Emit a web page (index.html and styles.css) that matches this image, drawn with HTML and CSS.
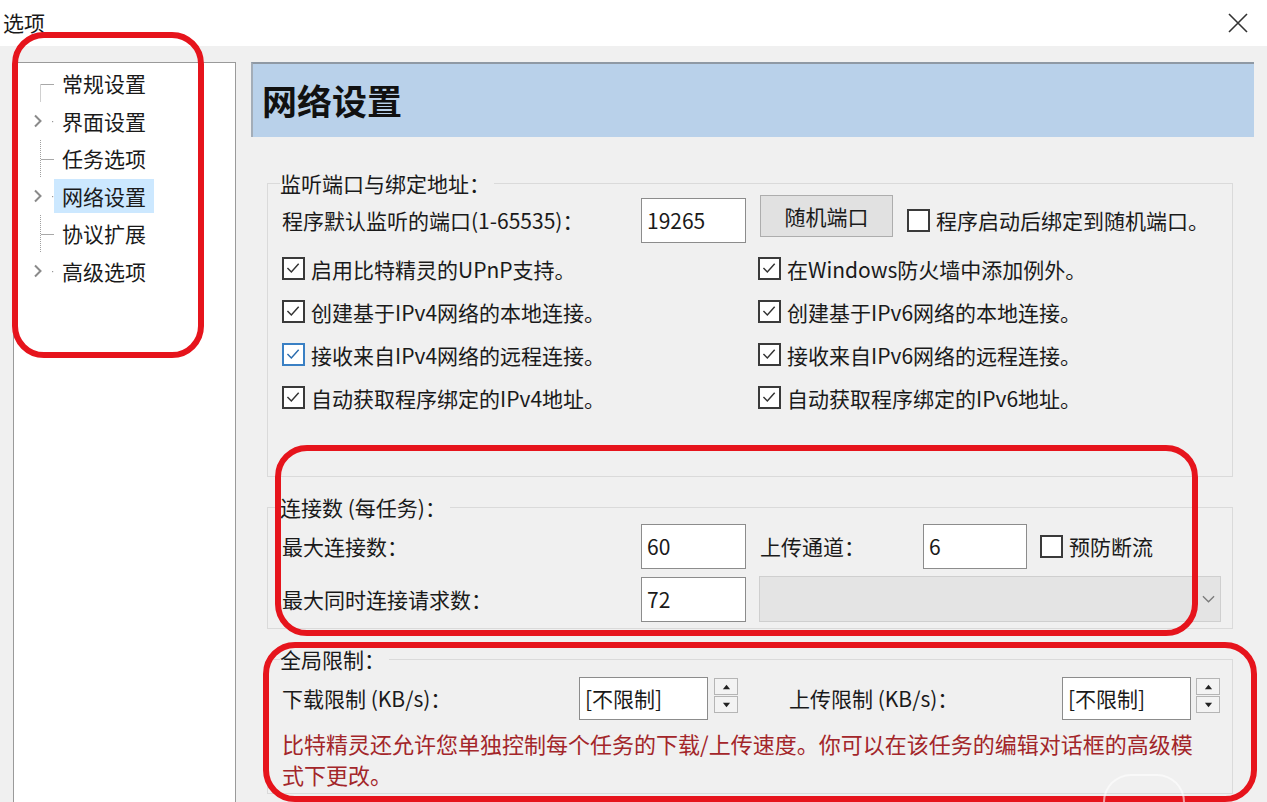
FILE: index.html
```html
<!DOCTYPE html>
<html lang="zh-CN">
<head>
  <meta charset="utf-8">
  <meta name="viewport" content="width=device-width, initial-scale=1.0">
  <title>选项</title>
  <link rel="stylesheet" href="styles.css">
</head>
<body>
  <div class="titlebar">
    <span class="title">选项</span>
    <svg class="close" viewBox="0 0 20 20"><path d="M1 1 L19 19 M19 1 L1 19"/></svg>
  </div>

  <div class="main">
    <!-- left navigation tree -->
    <ul class="tree">
      <li>
        <svg class="gutter" viewBox="0 0 40 37.5"><path class="dots" d="M26.5 19.5 V37.5"/><path class="hline" d="M27 19.5 H41"/></svg>
        <span class="label">常规设置</span>
      </li>
      <li>
        <svg class="gutter" viewBox="0 0 40 37.5"><path class="chev" d="M21 13.5 L26.5 19 L21 24.5"/><rect class="dot" x="38" y="19" width="1.2" height="1.2"/></svg>
        <span class="label">界面设置</span>
      </li>
      <li>
        <svg class="gutter" viewBox="0 0 40 37.5"><path class="dots" d="M26.5 0 V37.5"/><path class="hline" d="M27 19.5 H41"/></svg>
        <span class="label">任务选项</span>
      </li>
      <li class="selected">
        <svg class="gutter" viewBox="0 0 40 37.5"><path class="chev" d="M21 13.5 L26.5 19 L21 24.5"/><rect class="dot" x="38" y="19" width="1.2" height="1.2"/></svg>
        <span class="label">网络设置</span>
      </li>
      <li>
        <svg class="gutter" viewBox="0 0 40 37.5"><path class="dots" d="M26.5 0 V37.5"/><path class="hline" d="M27 19.5 H41"/></svg>
        <span class="label">协议扩展</span>
      </li>
      <li>
        <svg class="gutter" viewBox="0 0 40 37.5"><path class="chev" d="M21 13.5 L26.5 19 L21 24.5"/><rect class="dot" x="38" y="19" width="1.2" height="1.2"/></svg>
        <span class="label">高级选项</span>
      </li>
    </ul>

    <div class="content">
      <div class="page-header">网络设置</div>

      <fieldset class="group group-listen">
        <legend>监听端口与绑定地址：</legend>
        <div class="row port-row">
          <span class="lbl-wide">程序默认监听的端口(1-65535)：</span>
          <input class="textbox w-105" type="text" value="19265">
          <button class="btn">随机端口</button>
          <label class="check ml-14"><span class="cb"></span>程序启动后绑定到随机端口。</label>
        </div>
        <div class="check-grid">
          <label class="check"><span class="cb"><svg viewBox="0 0 22 22"><path d="M4 10.5 L8.5 15 L17 5.5"/></svg></span>启用比特精灵的UPnP支持。</label>
          <label class="check"><span class="cb"><svg viewBox="0 0 22 22"><path d="M4 10.5 L8.5 15 L17 5.5"/></svg></span>在Windows防火墙中添加例外。</label>
          <label class="check"><span class="cb"><svg viewBox="0 0 22 22"><path d="M4 10.5 L8.5 15 L17 5.5"/></svg></span>创建基于IPv4网络的本地连接。</label>
          <label class="check"><span class="cb"><svg viewBox="0 0 22 22"><path d="M4 10.5 L8.5 15 L17 5.5"/></svg></span>创建基于IPv6网络的本地连接。</label>
          <label class="check"><span class="cb hover"><svg viewBox="0 0 22 22"><path d="M4 10.5 L8.5 15 L17 5.5"/></svg></span>接收来自IPv4网络的远程连接。</label>
          <label class="check"><span class="cb"><svg viewBox="0 0 22 22"><path d="M4 10.5 L8.5 15 L17 5.5"/></svg></span>接收来自IPv6网络的远程连接。</label>
          <label class="check"><span class="cb"><svg viewBox="0 0 22 22"><path d="M4 10.5 L8.5 15 L17 5.5"/></svg></span>自动获取程序绑定的IPv4地址。</label>
          <label class="check"><span class="cb"><svg viewBox="0 0 22 22"><path d="M4 10.5 L8.5 15 L17 5.5"/></svg></span>自动获取程序绑定的IPv6地址。</label>
        </div>
      </fieldset>

      <fieldset class="group group-conn">
        <legend>连接数 (每任务)：</legend>
        <div class="row">
          <span class="lbl-wide">最大连接数：</span>
          <input class="textbox w-105" type="text" value="60">
          <span class="lbl-upload">上传通道：</span>
          <input class="textbox w-104" type="text" value="6">
          <label class="check ml-13"><span class="cb"></span>预防断流</label>
        </div>
        <div class="row row-gap">
          <span class="lbl-wide">最大同时连接请求数：</span>
          <input class="textbox w-105" type="text" value="72">
          <div class="combo">
            <svg viewBox="0 0 14 8"><path d="M1 1 L7 7 L13 1"/></svg>
          </div>
        </div>
      </fieldset>

      <fieldset class="group group-limit">
        <legend>全局限制：</legend>
        <div class="row">
          <span class="lbl-down">下载限制 (KB/s)：</span>
          <input class="textbox w-129" type="text" value="[不限制]">
          <div class="spin ml-6">
            <span class="spin-btn"><svg viewBox="0 0 10 6"><path d="M5 0.5 L9 5.5 H1 Z"/></svg></span>
            <span class="spin-btn"><svg viewBox="0 0 10 6"><path d="M1 0.5 H9 L5 5.5 Z"/></svg></span>
          </div>
          <span class="lbl-up">上传限制 (KB/s)：</span>
          <input class="textbox w-129" type="text" value="[不限制]">
          <div class="spin ml-5">
            <span class="spin-btn"><svg viewBox="0 0 10 6"><path d="M5 0.5 L9 5.5 H1 Z"/></svg></span>
            <span class="spin-btn"><svg viewBox="0 0 10 6"><path d="M1 0.5 H9 L5 5.5 Z"/></svg></span>
          </div>
        </div>
        <p class="note">比特精灵还允许您单独控制每个任务的下载/上传速度。你可以在该任务的编辑对话框的高级模式下更改。</p>
      </fieldset>
    </div>
  </div>

  <!-- red annotation frames drawn over the dialog -->
  <div class="mark mark-tree"></div>
  <div class="mark mark-conn"></div>
  <div class="mark mark-limit"></div>
  <div class="watermark"></div>
</body>
</html>
```

FILE: styles.css
```css
*, *::before, *::after {
  box-sizing: border-box;
  margin: 0;
  padding: 0;
}

body {
  position: relative;
  width: 1267px;
  height: 802px;
  overflow: hidden;
  background-color: #f0f0f0;
  font-family: "Noto Sans CJK SC", "Microsoft YaHei", sans-serif;
  font-size: 21px;
  color: #1a1a1a;
}

/* title bar */
.titlebar {
  height: 46px;
  background-color: #fff;
  display: flex;
  align-items: center;
  justify-content: space-between;
  padding: 0 19px 1px 3px;
}

.title {
  font-size: 21px;
  line-height: 1;
}

.close {
  width: 20px;
  height: 20px;
  stroke: #333;
  stroke-width: 1.6;
  fill: none;
}

.main {
  display: flex;
  height: 756px;
  overflow: hidden;
  padding: 16px 0 0 13px;
}

/* tree */
.tree {
  list-style: none;
  width: 223px;
  flex-shrink: 0;
  background-color: #fff;
  border: 1px solid #9a9a9a;
  border-bottom: none;
  padding-top: 1.5px;
}

.tree li {
  display: flex;
  align-items: center;
  height: 37.5px;
}

.gutter {
  width: 40px;
  height: 37.5px;
  flex-shrink: 0;
  fill: none;
}

.gutter .dots {
  stroke: #a0a0a0;
  stroke-width: 1;
  stroke-dasharray: 1 1;
}

.gutter .hline {
  stroke: #a8a8a8;
  stroke-width: 1;
}

.gutter .chev {
  stroke: #8a8a8a;
  stroke-width: 2;
}

.gutter .dot {
  fill: #999;
}

.tree .label {
  padding: 0 8px;
  line-height: 34px;
  font-size: 21px;
}

.tree .selected .label {
  background-color: #cce8ff;
}

/* right side */
.content {
  width: 1003px;
  margin-left: 15px;
  display: flex;
  flex-direction: column;
}

.page-header {
  height: 75px;
  flex-shrink: 0;
  background-color: #b9d1ea;
  border-top: 2px solid #8f99a4;
  border-left: 2px solid #a3adb8;
  padding-left: 9px;
  font-size: 35px;
  font-weight: bold;
  line-height: 72px;
  color: #111;
}

.group {
  border: 1px solid #dadada;
  margin: 17px 21px 0 16px;
  padding: 0 10px 0 14px;
  min-width: 0;
}

.group-listen {
  margin-top: 33px;
  padding-bottom: 57px;
}

.group-conn {
  padding-bottom: 6px;
}

.group-limit {
  padding-bottom: 3px;
}

.group legend {
  margin-left: -2px;
  padding: 0 4px 0 0;
  line-height: 26px;
  font-size: 21px;
}

.row {
  display: flex;
  align-items: center;
  height: 46px;
  margin-top: 3px;
}

.port-row {
  margin-top: 1px;
  margin-bottom: 4px;
}

.row-gap {
  margin-top: 7px;
}

.lbl-wide {
  width: 359px;
  flex-shrink: 0;
}

.lbl-upload {
  width: 163px;
  margin-left: 14px;
  flex-shrink: 0;
}

.lbl-down {
  width: 297px;
  flex-shrink: 0;
}

.lbl-up {
  width: 273px;
  margin-left: 51px;
  flex-shrink: 0;
}

.textbox {
  height: 45px;
  background-color: #fff;
  border: 1px solid #8c8c8c;
  padding: 0 5px;
  font: inherit;
  color: #1a1a1a;
  outline: none;
}

.w-105 { width: 105px; }
.w-104 { width: 104px; }
.w-129 { width: 129px; height: 43px; }

.ml-5 { margin-left: 5px; }
.ml-6 { margin-left: 6px; }
.ml-13 { margin-left: 13px; }
.ml-14 { margin-left: 14px; }

.btn {
  width: 133px;
  height: 42px;
  margin: 0 0 8px 14px;
  background-color: #e1e1e1;
  border: 1px solid #adadad;
  font: inherit;
  color: #1a1a1a;
}

.check {
  display: flex;
  align-items: center;
  gap: 6px;
  white-space: nowrap;
}

.cb {
  width: 23px;
  height: 23px;
  flex-shrink: 0;
  border: 2px solid #3a3a3a;
  background-color: #fff;
  display: flex;
}

.cb svg {
  width: 19px;
  height: 19px;
  fill: none;
  stroke: #333;
  stroke-width: 1.7;
}

.cb.hover {
  border-color: #3a80c4;
}

.cb.hover svg {
  stroke: #2a6cae;
}

.check-grid {
  display: grid;
  grid-template-columns: 476px 1fr;
  grid-auto-rows: 43px;
  align-items: center;
}

.combo {
  width: 462px;
  height: 46px;
  margin-left: 13px;
  background-color: #e4e4e4;
  border: 1px solid #cfcfcf;
  display: flex;
  align-items: center;
  justify-content: flex-end;
  padding-right: 5px;
}

.combo svg {
  width: 13px;
  height: 8px;
  fill: none;
  stroke: #7a7a7a;
  stroke-width: 1.4;
}

.spin {
  display: flex;
  flex-direction: column;
  gap: 1px;
  align-self: flex-start;
  margin-top: 3px;
}

.spin-btn {
  width: 24px;
  height: 17px;
  background-color: #f3f3f3;
  border: 1px solid #b5b5b5;
  display: flex;
  align-items: center;
  justify-content: center;
}

.spin-btn svg {
  width: 9px;
  height: 6px;
  fill: #222;
}

.note {
  width: 922px;
  margin-top: 7px;
  font-size: 22px;
  line-height: 31px;
  color: #a3262a;
}

/* red annotations */
.mark {
  position: absolute;
  border: 6px solid #e6141c;
  border-radius: 32px;
  pointer-events: none;
}

.mark-tree {
  left: 12px;
  top: 32px;
  width: 192px;
  height: 326px;
}

.mark-conn {
  left: 275px;
  top: 445px;
  width: 923px;
  height: 191px;
}

.mark-limit {
  left: 263px;
  top: 642px;
  width: 994px;
  height: 160px;
}

.watermark {
  position: absolute;
  left: 1103px;
  top: 774px;
  width: 82px;
  height: 28px;
  border: 2px solid rgba(255, 255, 255, 0.6);
  border-bottom: none;
  border-radius: 41px 41px 0 0;
}
```
